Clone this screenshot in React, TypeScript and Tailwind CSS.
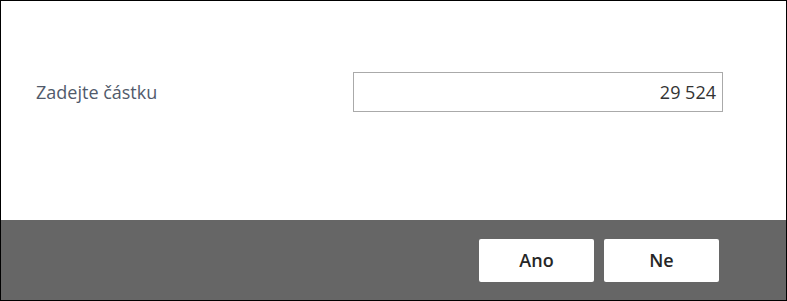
export default function App() {
  return (
    <div
      className="w-[787px] h-[301px] border border-black flex flex-col bg-white"
      style={{ fontFamily: '"Open Sans", "Noto Sans", sans-serif' }}
    >
      <div className="flex-1 pt-[71px] pl-[35px]">
        <div className="flex items-center">
          <div className="w-[317px] text-[18px] text-[#515a6b] leading-none">Zadejte částku</div>
          <div className="w-[370px] h-[40px] border border-[#aaaaaa] flex items-center justify-end pr-[6px] text-[18px] text-[#333333]">
            29 524
          </div>
        </div>
      </div>
      <div className="h-[80px] bg-[#666666] flex justify-end items-start pt-[19px] pr-[67px] gap-[10px]">
        <button className="w-[115px] h-[43px] bg-white rounded-[2px] text-[18px] font-semibold text-[#262626]">
          Ano
        </button>
        <button className="w-[115px] h-[43px] bg-white rounded-[2px] text-[18px] font-semibold text-[#262626]">
          Ne
        </button>
      </div>
    </div>
  );
}
